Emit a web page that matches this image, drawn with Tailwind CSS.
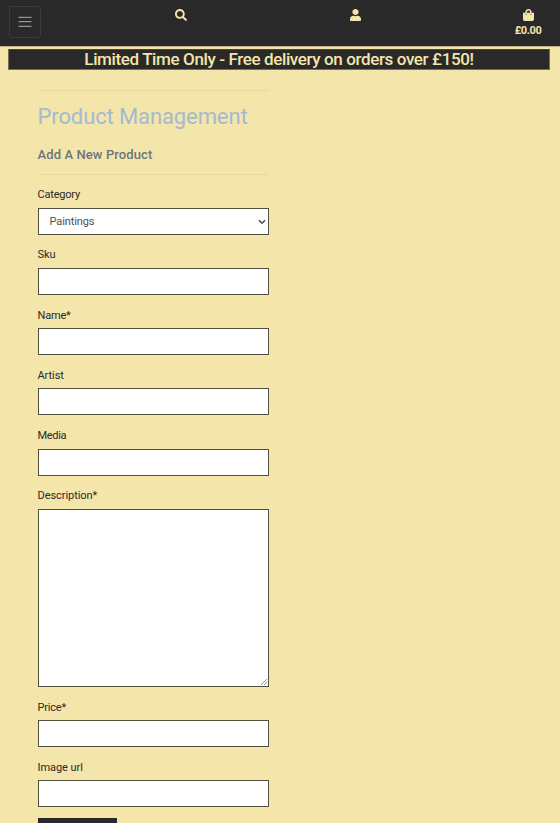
<!DOCTYPE html>
<html lang="en">
<head>
<meta charset="utf-8">
<title>Product Management</title>
<script src="https://cdn.jsdelivr.net/npm/@tailwindcss/browser@4"></script>
</head>
<body class="h-[823px] overflow-hidden bg-[#f4e5ab] font-[Roboto,sans-serif] text-[11px] text-[#292929]">
<header class="flex h-[46px] items-start bg-[#292929] text-[#f4e5ab]">
  <button aria-label="Menu" class="mt-[6px] ml-[9px] flex h-8 w-8 shrink-0 items-center justify-center rounded-[3px] border border-[#3b3b3b]">
    <svg class="h-[14px] w-[14px]" viewBox="0 0 14 14" stroke="#949494" stroke-width="1.2"><path d="M.5 2.400h13M.5 6.700h13M.5 11.400h13"/></svg>
  </button>
  <a class="mt-[9px] ml-[134px] shrink-0"><svg class="h-3 w-3" viewBox="0 0 512 512" fill="currentColor"><path d="M505 442.700 405.300 343c-4.500-4.500-10.600-7-17-7H372c27.600-35.300 44-79.700 44-128C416 93.100 322.900 0 208 0S0 93.100 0 208s93.100 208 208 208c48.300 0 92.700-16.400 128-44v16.300c0 6.400 2.500 12.500 7 17l99.700 99.700c9.400 9.400 24.600 9.400 33.900 0l28.300-28.300c9.400-9.400 9.400-24.600.1-34zM208 336c-70.700 0-128-57.200-128-128 0-70.700 57.200-128 128-128 70.700 0 128 57.200 128 128 0 70.700-57.200 128-128 128z"/></svg></a>
  <a class="mt-[9px] ml-[163px] shrink-0"><svg class="h-3 w-[11px]" viewBox="0 0 448 512" preserveAspectRatio="none" fill="currentColor"><path d="M224 256c70.700 0 128-57.300 128-128S294.700 0 224 0 96 57.300 96 128s57.300 128 128 128zm89.600 32h-16.700a174 174 0 0 1-145.800 0h-16.700C60.200 288 0 348.200 0 422.400V464c0 26.500 21.500 48 48 48h352c26.500 0 48-21.500 48-48v-41.600c0-74.200-60.200-134.400-134.400-134.400z"/></svg></a>
  <a class="mt-[9px] ml-[152px] flex w-[30px] shrink-0 flex-col items-center">
    <svg class="h-3 w-[11px]" viewBox="0 0 448 512" preserveAspectRatio="none" fill="currentColor"><path d="M352 160v-32C352 57.400 294.600 0 224 0S96 57.400 96 128v32H0v272c0 44.200 35.800 80 80 80h288c44.200 0 80-35.800 80-80V160zm-192-32c0-35.300 28.700-64 64-64s64 28.700 64 64v32H160zm160 120a24 24 0 1 1 0-48 24 24 0 0 1 0 48zm-192 0a24 24 0 1 1 0-48 24 24 0 0 1 0 48z"/></svg>
    <span class="mt-[3px] text-[11px] leading-[14px] font-bold tracking-[-0.4px]">£0.00</span>
  </a>
</header>
<div class="h-px bg-[#bcb187]"></div>
<div class="mt-[2px] ml-2 flex h-[21px] w-[542px] items-center justify-center border border-[#77704f] border-t-[#494637] bg-[#292929] text-[#f4e5ab]">
  <h4 class="text-[17px] font-medium tracking-[-0.380px] whitespace-nowrap">Limited Time Only - Free delivery on orders over £150!</h4>
</div>
<main class="mt-5 ml-[37.500px] w-[231.500px]">
  <hr class="border-[#e5d8a2]">
  <h2 class="mt-[12px] h-[28px] text-[22px] leading-[28px] tracking-[-0.110px] whitespace-nowrap text-[#a2bbd1]">Product Management</h2>
  <h5 class="mt-[15px] h-[18px] text-[13px] leading-[18px] font-medium tracking-[0.1px] whitespace-nowrap text-[#6c757d]">Add A New Product</h5>
  <hr class="mt-[10px] border-[#e5d8a2]">
  <form class="mt-[13.200px] tracking-[-0.060px]">
    <div class="h-[60.150px]"><label class="block h-[19.800px] leading-[14px] tracking-[-0.200px]" for="category">Category</label>
      <div class="relative"><select id="category" class="block h-[27px] w-full appearance-none border border-[#54503f] bg-white pt-[2px] pl-[11px] text-[11px] tracking-[-0.100px] text-[#495057]"><option>Paintings</option></select>
      <svg class="pointer-events-none absolute top-[11px] right-[3px] h-[6px] w-[8px]" viewBox="0 0 8 6" fill="none" stroke="#495057" stroke-width="1.6"><path d="m1 1.200 3 3 3-3"/></svg></div></div>
    <div class="h-[60.150px]"><label class="block h-[19.800px] leading-[14px]" for="sku">Sku</label><input id="sku" class="block h-[27px] w-full border border-[#54503f] bg-white"></div>
    <div class="h-[60.150px]"><label class="block h-[19.800px] pt-[0.400px] leading-[14px] tracking-[-0.200px]" for="name">Name*</label><input id="name" class="block h-[27px] w-full border border-[#54503f] bg-white"></div>
    <div class="h-[60.150px]"><label class="block h-[19.800px] leading-[14px]" for="artist">Artist</label><input id="artist" class="block h-[27px] w-full border border-[#54503f] bg-white"></div>
    <div class="h-[60.150px]"><label class="block h-[19.800px] leading-[14px] tracking-[-0.300px]" for="media">Media</label><input id="media" class="block h-[27px] w-full border border-[#54503f] bg-white"></div>
    <div class="h-[211.600px]"><label class="block h-[19.800px] leading-[14px]" for="description">Description*</label>
      <div class="relative"><textarea id="description" class="block h-[178px] w-full resize-none border border-[#54503f] bg-white"></textarea>
      <svg class="pointer-events-none absolute right-[2px] bottom-[2px] h-[6px] w-[6px]" viewBox="0 0 6 6" stroke="#777" stroke-width=".8"><path d="M0 6 6 0M3 6l3-3"/></svg></div></div>
    <div class="h-[60.100px]"><label class="block h-[19.800px] pt-[0.400px] leading-[14px] tracking-[-0.200px]" for="price">Price*</label><input id="price" class="block h-[27px] w-full border border-[#54503f] bg-white"></div>
    <div class="h-[57.500px]"><label class="block h-[19.800px] leading-[14px]" for="image">Image url</label><input id="image" class="block h-[27px] w-full border border-[#54503f] bg-white"></div>
    <button aria-label="Choose image" class="block h-[27px] w-[79px] bg-[#292929]"></button>
  </form>
</main>
</body>
</html>
